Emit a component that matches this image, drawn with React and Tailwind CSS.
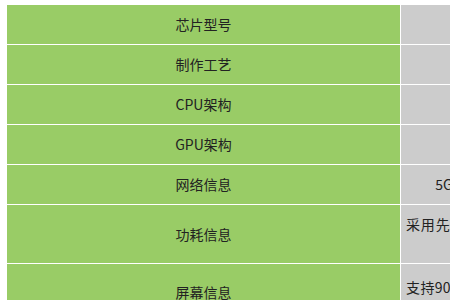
export default function App() {
  const rows = [
    { label: "芯片型号", h: "h-[39px]", value: "天玑800U", mode: "center" },
    { label: "制作工艺", h: "h-[39px]", value: "7nm", mode: "center" },
    { label: "CPU架构", h: "h-[39px]", value: "2×A76+6×A55", mode: "center" },
    { label: "GPU架构", h: "h-[39px]", value: "Mali-G57 MC3", mode: "center" },
    { label: "网络信息", h: "h-[39px]", value: "5G双模全网通，支持5G+5G双卡双待双通，支持Wi-Fi 6", mode: "center" },
    { label: "功耗信息", h: "h-[58px]", value: "采用先进的7nm制程工艺，八核CPU架构设计，能效表现更出色，续航更持久，日常使用更加流畅省电", mode: "top10" },
    { label: "屏幕信息", h: "h-[56px]", value: "支持90Hz高刷新率屏幕，支持FHD+分辨率，带来更流畅细腻的视觉体验，显示效果清晰", mode: "top14" },
  ];
  return (
    <div
      className="w-[450px] h-[300px] overflow-hidden bg-white pl-[7px] pt-[5px] text-[14px] text-[#222]"
      style={{ fontFamily: '"Microsoft YaHei", "Noto Sans CJK SC", "Noto Sans", sans-serif' }}
    >
      <div className="grid grid-cols-[393px_410px] gap-px w-[804px]">
        {rows.map((r) => (
          <>
            <div key={r.label + "l"} className={`${r.h} bg-[#99cc66] flex items-center justify-center leading-[19px]`}>
              {r.label}
            </div>
            {r.mode === "center" ? (
              <div key={r.label + "r"} className={`${r.h} bg-[#cccccc] flex items-center justify-center leading-[19px] px-[5px] text-center whitespace-nowrap`}>
                {r.value}
              </div>
            ) : r.mode === "top10" ? (
              <div key={r.label + "r"} className={`${r.h} bg-[#cccccc] px-[5px] pt-[10px] leading-[19px] overflow-hidden text-justify [text-align-last:center]`}>
                {r.value}
              </div>
            ) : (
              <div key={r.label + "r"} className={`${r.h} bg-[#cccccc] px-[5px] pt-[14px] leading-[19px] overflow-hidden text-justify [text-align-last:center]`}>
                {r.value}
              </div>
            )}
          </>
        ))}
      </div>
    </div>
  );
}
